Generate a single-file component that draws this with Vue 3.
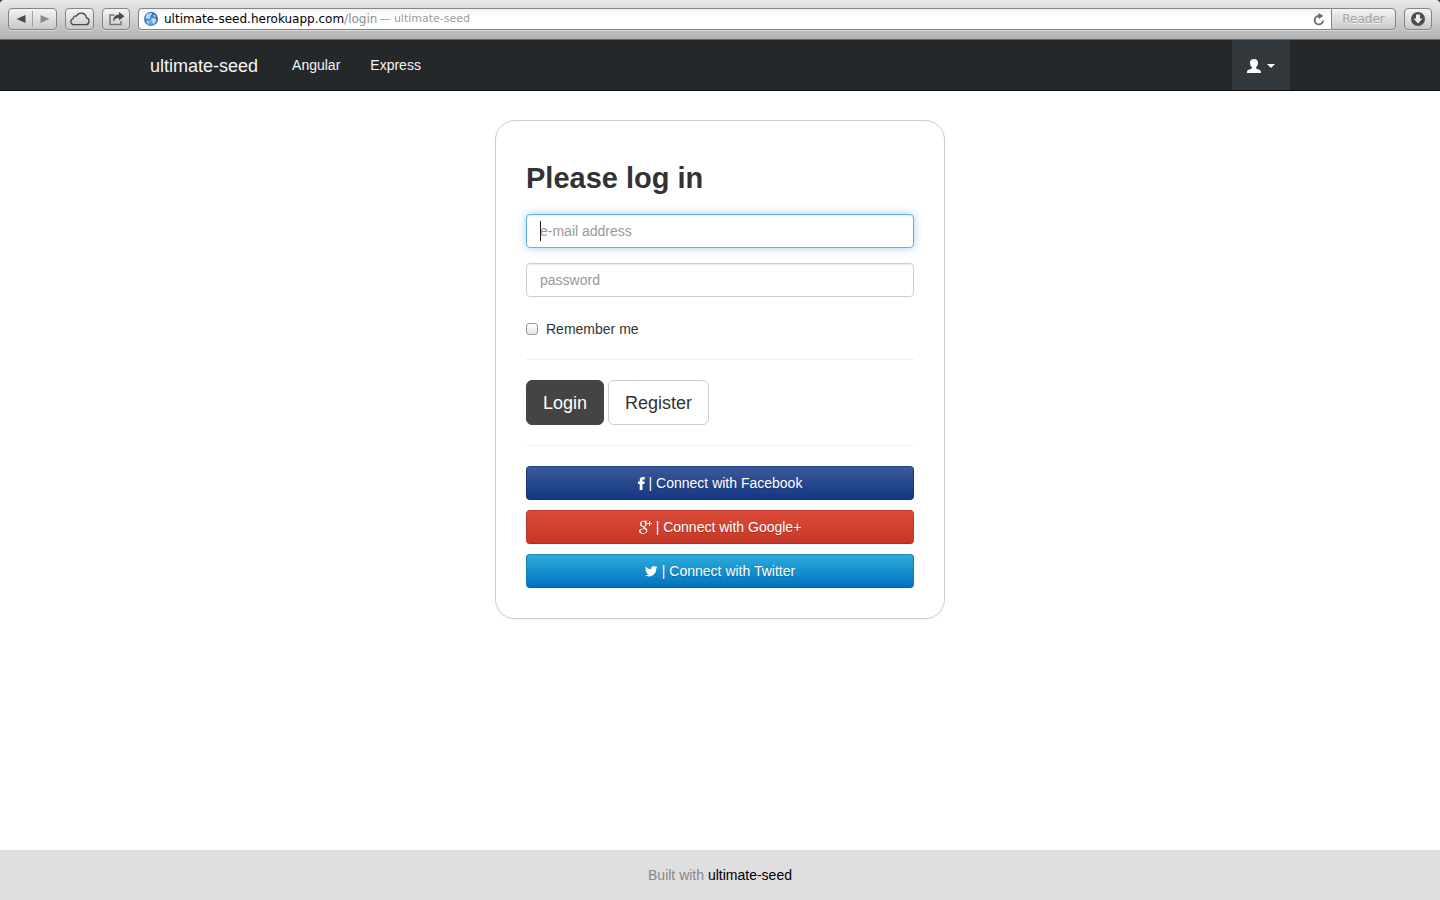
<script setup>
import { ref } from 'vue'

const email = ref('')
const password = ref('')
const remember = ref(false)
</script>

<template>
  <div class="window">
    <div class="frame">
      <div class="toolbar">
        <div class="segmented">
          <button type="button" aria-label="Back">
            <svg width="10" height="8" viewBox="0 0 10 8"><path d="M9.500 0v8L.5 4z" fill="#4a4a4a" /></svg>
          </button>
          <button type="button" aria-label="Forward">
            <svg width="10" height="8" viewBox="0 0 10 8"><path d="M.5 0v8l9-4z" fill="#8c8c8c" /></svg>
          </button>
        </div>
        <button type="button" class="tool" aria-label="iCloud tabs">
          <svg width="20" height="14" viewBox="0 0 20 14">
            <path d="M4.800 12.700h10.700a3.500 3.500 0 0 0 .9-6.900A5.200 5.200 0 0 0 6.600 4 2.700 2.700 0 0 0 3.200 6.700a3.100 3.100 0 0 0 1.600 6z" fill="none" stroke="#4a4a4a" stroke-width="1.300" />
          </svg>
        </button>
        <button type="button" class="tool share" aria-label="Share">
          <svg width="17" height="14" viewBox="0 0 17 14">
            <path d="M6.500 3H2v9.500h11V9" fill="none" stroke="#777" stroke-width="1.500" />
            <path d="M11 0l5.500 4.300L11 8.500V6C8 6 6 7.300 5 9.800 5 5.500 7.300 2.800 11 2.600z" fill="#4d4d4d" />
          </svg>
        </button>
        <div class="address">
          <svg class="globe" width="14" height="14" viewBox="0 0 14 14">
            <defs>
              <radialGradient id="sea" cx=".45" cy=".7" r=".7">
                <stop offset="0" stop-color="#69b5f2" />
                <stop offset="1" stop-color="#1d57ad" />
              </radialGradient>
            </defs>
            <circle cx="7" cy="7" r="7" fill="url(#sea)" />
            <path d="M2 3.500C3.500 1.500 6 .8 8 1.200L7.500 3 6 4l.5 1.500L4.500 7 3 6.200 1.500 7zM9 2l3 2-1 1.500L9.500 4zM8 6.500l2.500-.5L12.500 8 11 10.500 9 12.500 8.500 9.500 7.200 8zM2.500 8.500l2 1 .5 2.500-2-1.500z" fill="#d3ecfb" opacity=".85" />
          </svg>
          <span class="url">ultimate-seed.herokuapp.com<span class="path">/login</span></span>
          <span class="title">— ultimate-seed</span>
          <button type="button" class="reload" aria-label="Reload">
            <svg width="12" height="13" viewBox="0 0 12 13">
              <path d="M10 7.500A4.200 4.200 0 1 1 6 3" fill="none" stroke="#666" stroke-width="1.800" />
              <path d="M5.500 0L10.500 3 5.500 6z" fill="#666" />
            </svg>
          </button>
        </div>
        <button type="button" class="reader" disabled>Reader</button>
        <button type="button" class="tool download" aria-label="Downloads">
          <svg width="14" height="14" viewBox="0 0 14 14">
            <circle cx="7" cy="7" r="7" fill="#4d4d4d" />
            <path d="M5 2.500h4v4h2.500L7 11.500 2.500 6.500H5z" fill="#f0f0f0" />
          </svg>
        </button>
      </div>
    </div>

    <nav class="navbar">
      <div class="container">
        <a class="brand" href="#">ultimate-seed</a>
        <a class="link" href="#">Angular</a>
        <a class="link" href="#">Express</a>
        <button type="button" class="account" aria-label="Account">
          <svg width="14" height="14" viewBox="0 0 14 14">
            <path d="M7 0c2.600 0 4 1.500 4 3.900 0 1.900-.8 3.500-1.900 4.400v1c0 .7 4.200 1.400 4.700 2.700.2.500.2 1.500.2 2H0c0-.5 0-1.500.2-2 .5-1.300 4.700-2 4.700-2.700v-1C3.800 7.400 3 5.800 3 3.900 3 1.500 4.400 0 7 0z" fill="#fff" />
          </svg>
          <span class="caret"></span>
        </button>
      </div>
    </nav>

    <main>
      <form class="card" @submit.prevent>
        <h2>Please log in</h2>
        <div class="field">
          <input v-model="email" class="control active" type="email" placeholder="e-mail address" aria-label="e-mail address" />
          <span class="cursor"></span>
        </div>
        <div class="field">
          <input v-model="password" class="control" type="password" placeholder="password" aria-label="password" />
        </div>
        <label class="remember"><input v-model="remember" type="checkbox" />Remember me</label>
        <hr />
        <div class="actions">
          <button type="submit" class="btn dark">Login</button>
          <button type="button" class="btn light">Register</button>
        </div>
        <hr />
        <div class="socials">
          <a class="social facebook" href="#">
            <svg width="7" height="13" viewBox="0 0 7 13">
              <path d="M6.800.1v2.300H5.500c-.8 0-1 .3-1 .9v1.300h2.200l-.3 2.300H4.500V13H1.700V6.900H0V4.600h1.700V3.200C1.700 1.200 3 0 4.900 0c.9 0 1.600.1 1.900.1z" fill="#fff" />
            </svg>
            | Connect with Facebook
          </a>
          <a class="social google" href="#">
            <svg width="13" height="14" viewBox="0 0 13 14">
              <path fill="#fff" fill-rule="evenodd" d="M4.400.8h4.200l-.9.700H6.600c.8.600 1.200 1.400 1.200 2.300 0 1.100-.6 1.800-1.200 2.300-.5.400-.6.600-.6.900s.3.600.7.900c1 .8 1.700 1.400 1.700 2.700 0 1.700-1.500 3.200-4.300 3.200C1.800 13.800 0 12.700 0 11.200 0 9.300 2.100 8.500 4.900 8.400c-.4-.4-.6-.9-.4-1.500C2.400 7 1 5.700 1 4 1 2.200 2.500.8 4.400.8zM4.200 1.400C3.200 1.400 2.500 2.200 2.500 3.400c0 1.500.9 2.900 2.200 2.900 1.100 0 1.600-.8 1.600-1.900 0-1.500-.8-3-2.100-3zM5.400 9C3.100 9 1.500 9.700 1.500 11c0 1.200 1.100 2.100 3 2.100 1.700 0 2.600-.8 2.600-1.900 0-.9-.6-1.400-1.700-2.200z" />
              <path fill="#fff" d="M10 1h1v2h2v1h-2v2h-1V4H8V3h2z" />
            </svg>
            | Connect with Google+
          </a>
          <a class="social twitter" href="#">
            <svg width="13" height="11" viewBox="0 0 13 11">
              <path d="M12.500 1.300c-.4.500-.8 1-1.300 1.300v.4c0 3.500-2.600 7.400-7.400 7.400-1.500 0-2.800-.4-3.800-1.100 1.400.1 2.700-.3 3.800-1.100-1.200 0-2.100-.8-2.400-1.800h1.100C1.300 6.100.4 5.100.4 3.800c.4.200.8.300 1.200.3C.4 3.300.1 1.800.8.600c1.300 1.600 3.200 2.600 5.400 2.700C5.800 1.400 7.200 0 8.800 0c.7 0 1.400.3 1.900.8.600-.1 1.200-.3 1.600-.6-.2.600-.6 1.100-1.100 1.400.5 0 1-.1 1.300-.3z" fill="#fff" />
            </svg>
            | Connect with Twitter
          </a>
        </div>
      </form>
    </main>

    <footer>Built with <a href="#">ultimate-seed</a></footer>
  </div>
</template>

<style>
body {
  margin: 0;
}
</style>

<style scoped>
.window {
  display: flex;
  flex-direction: column;
  min-height: 100vh;
  background: #fff;
  color: #333;
  font: 14px/20px "Liberation Sans", Arial, sans-serif;
}
.window *,
.window *::before {
  box-sizing: border-box;
}
a {
  text-decoration: none;
}
button {
  margin: 0;
  padding: 0;
  font: inherit;
}
svg {
  display: block;
  flex: none;
}

.frame {
  background: #2b2d33;
}
.toolbar {
  display: flex;
  height: 40px;
  padding: 8px 8px 9px;
  border-bottom: 1px solid #686868;
  border-radius: 4px 4px 0 0;
  background: linear-gradient(#e9e9e9, #d0d0d0 50%, #b0b0b0);
  font-family: "DejaVu Sans", sans-serif;
  font-size: 12px;
}
.segmented,
.tool,
.reader {
  height: 22px;
  border: 1px solid #858585;
  border-radius: 4px;
  background: linear-gradient(#f4f4f4, #c9c9c9);
  box-shadow: 0 1px 0 #dadada;
}
.segmented {
  display: flex;
  align-items: center;
  width: 49px;
  margin-right: 8px;
}
.segmented button {
  display: flex;
  align-items: center;
  justify-content: center;
  flex: 1;
  height: 16px;
  border: 0;
  background: none;
}
.segmented button + button {
  border-left: 1px solid #a4a4a4;
}
.tool {
  display: flex;
  align-items: center;
  justify-content: center;
  width: 29px;
  margin-right: 8px;
}
.tool.share {
  width: 28px;
}
.tool.download {
  width: 28px;
  margin: 0 0 0 8px;
}
.address {
  display: flex;
  align-items: center;
  flex: 1;
  height: 22px;
  padding: 0 6px 0 5px;
  border: 1px solid #858585;
  border-right: 0;
  border-radius: 4px 0 0 4px;
  background: linear-gradient(#f3f3f3, #fff 40%);
  box-shadow: 0 1px 0 #dadada;
  color: #000;
  white-space: nowrap;
}
.globe {
  margin-right: 6px;
}
.path {
  color: #8e8e8e;
}
.title {
  margin-left: 2px;
  color: #9b9b9b;
  font-size: 11px;
}
.reload {
  margin-left: auto;
  border: 0;
  background: none;
}
.reader {
  width: 65px;
  border-radius: 0 4px 4px 0;
  color: #a2a2a2;
  text-shadow: 0 1px 0 #f4f4f4;
}

.navbar {
  height: 51px;
  border-bottom: 1px solid #090909;
  background: #24282b;
}
.container {
  display: flex;
  max-width: 1140px;
  margin: 0 auto;
}
.brand,
.link {
  padding: 15px;
  color: #f5f5f5;
}
.brand {
  padding: 15px 19px 15px 0;
  font-size: 18px;
  line-height: 22px;
}
.account {
  display: flex;
  align-items: center;
  justify-content: center;
  gap: 6px;
  width: 58px;
  height: 50px;
  padding-top: 2px;
  margin-left: auto;
  border: 0;
  background: #32383b;
}
.caret {
  border: 4px solid transparent;
  border-top-color: #fff;
  border-bottom: 0;
}

main {
  flex: 1;
  padding: 29px 16px;
}
.card {
  max-width: 450px;
  margin: 0 auto;
  padding: 40px 30px 30px;
  border: 1px solid #ccc;
  border-radius: 20px;
  box-shadow: 0 1px 2px rgba(0, 0, 0, 0.06);
}
h2 {
  margin: 0 0 18px;
  font-size: 29px;
  font-weight: bold;
  line-height: 35px;
}
.field {
  position: relative;
  margin-bottom: 15px;
}
.control {
  display: block;
  width: 100%;
  height: 34px;
  margin: 0;
  padding: 6px 13px;
  border: 1px solid #ccc;
  border-radius: 4px;
  outline: 0;
  background: #fff;
  box-shadow: inset 0 1px 1px rgba(0, 0, 0, 0.08);
  color: #555;
  font: inherit;
}
.control::placeholder {
  color: #999;
  opacity: 1;
}
.control.active {
  border-color: #66afe9;
  box-shadow: inset 0 1px 1px rgba(0, 0, 0, 0.08), 0 0 8px rgba(102, 175, 233, 0.6);
}
.cursor {
  position: absolute;
  top: 7px;
  left: 14px;
  width: 1px;
  height: 20px;
  background: #222;
}
.remember {
  display: flex;
  align-items: center;
  gap: 8px;
  margin-top: 22px;
}
.remember input {
  width: 12px;
  height: 12px;
  margin: 0;
  border: 1px solid #999;
  border-radius: 3px;
  appearance: none;
  background: linear-gradient(#fff, #e6e6e6);
}
.remember input:checked {
  background: #66afe9;
}
hr {
  width: 100%;
  height: 1px;
  margin: 20px 0;
  border: 0;
  background: #eee;
}
.actions {
  display: flex;
  gap: 4px;
}
.btn {
  height: 45px;
  padding: 0 16px;
  border: 1px solid #444;
  border-radius: 6px;
  font-size: 18px;
}
.dark {
  background: #444;
  color: #fff;
}
.light {
  border-color: #ccc;
  background: #fff;
  color: #333;
}
.socials {
  display: grid;
  gap: 10px;
}
.social {
  display: flex;
  align-items: center;
  justify-content: center;
  gap: 4px;
  height: 34px;
  border: 1px solid;
  border-radius: 4px;
  color: #fff;
  text-shadow: 0 1px 1px rgba(0, 0, 0, 0.2);
}
.facebook {
  border-color: #1f4384 #173577 #133072;
  background: linear-gradient(#3b5998, #133783);
}
.google {
  border-color: #bd3c2c #b53526 #ac2f20;
  background: linear-gradient(#dd4b39, #c53727);
}
.twitter {
  border-color: #1c87b9 #1178b4 #0665ad;
  background: linear-gradient(#2daddc, #0271bf);
}

footer {
  height: 50px;
  background: #dfdfdf;
  color: #888;
  line-height: 50px;
  text-align: center;
}
footer a {
  color: #000;
}
</style>
